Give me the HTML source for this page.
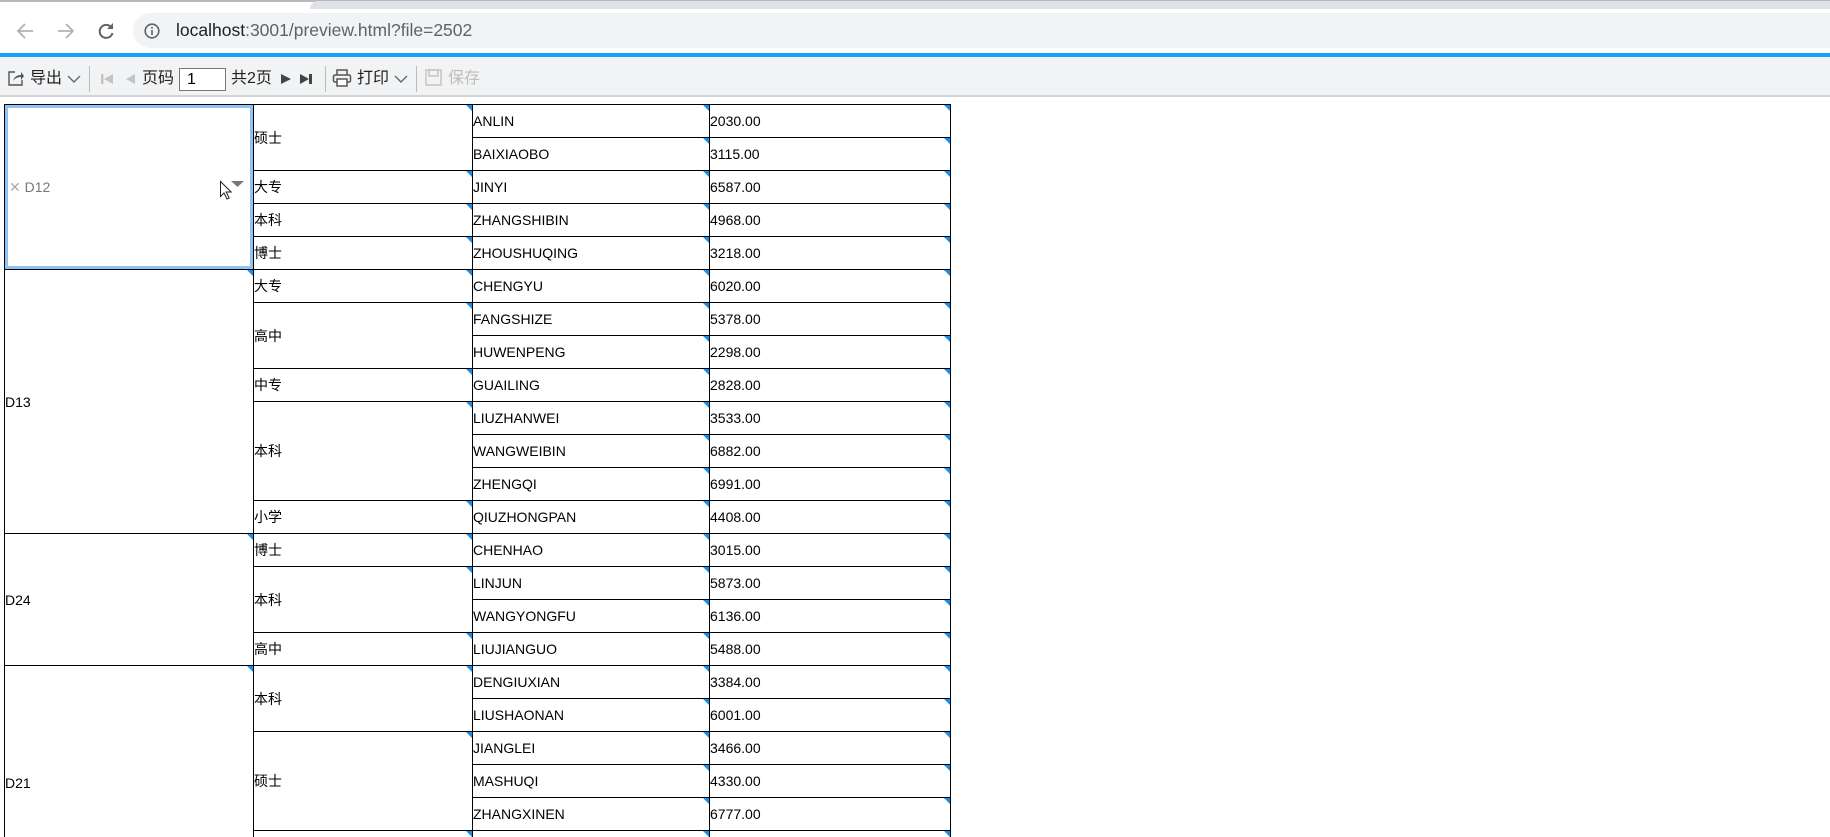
<!DOCTYPE html>
<html style="overflow:hidden;width:1830px;height:837px"><head><meta charset="utf-8">
<style>
*{margin:0;padding:0;box-sizing:border-box}
html,body{width:1830px;height:837px;overflow:hidden;background:#fff}
body{font-family:"Liberation Sans","Noto Sans CJK SC",sans-serif;color:#000}
#w{position:relative;width:1830px;height:837px;overflow:hidden}
.a{position:absolute}
.c{position:absolute;border-left:1px solid #000;border-top:1px solid #000;display:flex;align-items:center;font-size:14px;white-space:nowrap;overflow:visible}
.c:after{content:"";position:absolute;right:0;top:0;border-top:6px solid #1a8ee8;border-left:6px solid transparent}
.l4{border-right:1px solid #000}
.tb{position:absolute;top:68px;font-size:16px;line-height:22px;color:#222}
</style></head><body><div id="w">
<div class="a" style="left:0;top:0;width:1830px;height:2px;background:#b8b9bc"></div>
<div class="a" style="left:310px;top:1px;width:1520px;height:8px;background:#dee1e6;border-radius:8px 0 0 0"></div>
<div class="a" style="left:133px;top:13px;width:1697px;height:35px;background:#f1f3f4;border-radius:18px 0 0 18px"></div>
<svg class="a" style="left:14px;top:20px" width="120" height="22" viewBox="0 0 120 22">
<path d="M19 11H5M11 4L4 11l7 7" stroke="#b0b3b6" stroke-width="1.8" fill="none"/>
<path d="M44 11h14M52 4l7 7-7 7" stroke="#b0b3b6" stroke-width="1.8" fill="none"/>
<path d="M97 7a6.5 6.5 0 1 0 1.5 6" stroke="#5f6368" stroke-width="2" fill="none"/>
<path d="M99 3v6h-6z" fill="#5f6368"/>
</svg>
<svg class="a" style="left:144px;top:23px" width="16" height="16" viewBox="0 0 16 16"><circle cx="8" cy="8" r="6.8" stroke="#5f6368" stroke-width="1.6" fill="none"/><rect x="7.2" y="7" width="1.6" height="5" fill="#5f6368"/><rect x="7.2" y="4" width="1.6" height="1.7" fill="#5f6368"/></svg>
<div class="a" style="left:176px;top:19px;font-size:17.5px;color:#202124;line-height:22px">localhost<span style="color:#5f6368">:3001/preview.html?file=2502</span></div>
<div class="a" style="left:0;top:53px;width:1830px;height:4px;background:#1aa1f5"></div>
<div class="a" style="left:0;top:57px;width:1830px;height:40px;background:#f2f3f4;border-bottom:2px solid #d4d4d4"></div>
<svg class="a" style="left:7px;top:69px" width="18" height="18" viewBox="0 0 18 18"><path d="M8 3H2v13h13v-5" stroke="#555" stroke-width="1.4" fill="none"/><path d="M6 12c1-4 4-6 8-6V3l3 4-3 4V8c-3 0-6 1-8 4z" fill="#555"/></svg>
<div class="tb" style="left:30px">导出</div>
<svg class="a" style="left:67px;top:74px" width="14" height="10"><path d="M1 2l6 6 6-6" stroke="#666" stroke-width="1.4" fill="none"/></svg>
<div class="a" style="left:89px;top:66px;width:1px;height:26px;background:#bbb"></div>
<svg class="a" style="left:101px;top:73px" width="36" height="12"><rect x="0" y="1" width="2.5" height="10" fill="#c4c4c4"/><path d="M12 1v10L3 6z" fill="#c4c4c4"/><path d="M34 1v10l-9-5z" fill="#c4c4c4"/></svg>
<div class="tb" style="left:142px">页码</div>
<div class="a" style="left:179px;top:68px;width:47px;height:23px;background:#fff;border:1px solid #777;font-size:16px;line-height:21px;padding-left:7px">1</div>
<div class="tb" style="left:231px">共2页</div>
<svg class="a" style="left:281px;top:73px" width="34" height="12"><path d="M0 1v10l10-5z" fill="#444"/><path d="M19 1v10l9-5z" fill="#444"/><rect x="28" y="1" width="3" height="10" fill="#444"/></svg>
<div class="a" style="left:325px;top:66px;width:1px;height:26px;background:#bbb"></div>
<svg class="a" style="left:332px;top:68px" width="20" height="20" viewBox="0 0 20 20"><path d="M5 7V2h10v5" stroke="#555" stroke-width="1.5" fill="none"/><rect x="1.5" y="7" width="17" height="7" rx="1.5" stroke="#555" stroke-width="1.5" fill="none"/><rect x="5" y="11" width="10" height="7" stroke="#555" stroke-width="1.5" fill="#fff"/></svg>
<div class="tb" style="left:357px">打印</div>
<svg class="a" style="left:394px;top:74px" width="14" height="10"><path d="M1 2l6 6 6-6" stroke="#666" stroke-width="1.4" fill="none"/></svg>
<div class="a" style="left:416px;top:66px;width:1px;height:26px;background:#bbb"></div>
<svg class="a" style="left:425px;top:69px" width="17" height="17" viewBox="0 0 17 17"><rect x="1" y="1" width="15" height="15" stroke="#c4c4c4" stroke-width="1.5" fill="none"/><rect x="4" y="1" width="9" height="6" stroke="#c4c4c4" stroke-width="1.5" fill="none"/></svg>
<div class="tb" style="left:448px;color:#bdbdbd">保存</div>

<div class="c" style="left:4px;top:104px;width:249px;height:165px;border-right:1px solid #000"></div>
<div class="c" style="left:4px;top:269px;width:249px;height:264px">D13</div>
<div class="c" style="left:4px;top:533px;width:249px;height:132px">D24</div>
<div class="c" style="left:4px;top:665px;width:249px;height:172px;align-items:flex-start;padding-top:107px;line-height:20px">D21</div>
<div class="a" style="left:5px;top:105px;width:248px;height:164px;border:3px solid #8ec3f5;background:#fff"></div>
<div class="a" style="left:9px;top:177px;font-size:14px;color:#777;line-height:20px"><span style="color:#aaa">✕</span> D12</div>
<svg class="a" style="left:219px;top:180px" width="28" height="22"><path d="M12 1h13l-6.5 6z" fill="#777"/><path d="M1.5 1.5v15l3.5-3.5 3 6 2.2-1-3-6h5z" fill="#fff" stroke="#222" stroke-width="1"/></svg>

<div class="c" style="left:253px;top:104px;width:219px;height:66px">硕士</div>
<div class="c" style="left:253px;top:170px;width:219px;height:33px">大专</div>
<div class="c" style="left:253px;top:203px;width:219px;height:33px">本科</div>
<div class="c" style="left:253px;top:236px;width:219px;height:33px">博士</div>
<div class="c" style="left:253px;top:269px;width:219px;height:33px">大专</div>
<div class="c" style="left:253px;top:302px;width:219px;height:66px">高中</div>
<div class="c" style="left:253px;top:368px;width:219px;height:33px">中专</div>
<div class="c" style="left:253px;top:401px;width:219px;height:99px">本科</div>
<div class="c" style="left:253px;top:500px;width:219px;height:33px">小学</div>
<div class="c" style="left:253px;top:533px;width:219px;height:33px">博士</div>
<div class="c" style="left:253px;top:566px;width:219px;height:66px">本科</div>
<div class="c" style="left:253px;top:632px;width:219px;height:33px">高中</div>
<div class="c" style="left:253px;top:665px;width:219px;height:66px">本科</div>
<div class="c" style="left:253px;top:731px;width:219px;height:99px">硕士</div>
<div class="c" style="left:253px;top:830px;width:219px;height:7px"></div>

<div class="c" style="left:472px;top:104px;width:237px;height:33px">ANLIN</div><div class="c l4" style="left:709px;top:104px;width:242px;height:33px">2030.00</div>
<div class="c" style="left:472px;top:137px;width:237px;height:33px">BAIXIAOBO</div><div class="c l4" style="left:709px;top:137px;width:242px;height:33px">3115.00</div>
<div class="c" style="left:472px;top:170px;width:237px;height:33px">JINYI</div><div class="c l4" style="left:709px;top:170px;width:242px;height:33px">6587.00</div>
<div class="c" style="left:472px;top:203px;width:237px;height:33px">ZHANGSHIBIN</div><div class="c l4" style="left:709px;top:203px;width:242px;height:33px">4968.00</div>
<div class="c" style="left:472px;top:236px;width:237px;height:33px">ZHOUSHUQING</div><div class="c l4" style="left:709px;top:236px;width:242px;height:33px">3218.00</div>
<div class="c" style="left:472px;top:269px;width:237px;height:33px">CHENGYU</div><div class="c l4" style="left:709px;top:269px;width:242px;height:33px">6020.00</div>
<div class="c" style="left:472px;top:302px;width:237px;height:33px">FANGSHIZE</div><div class="c l4" style="left:709px;top:302px;width:242px;height:33px">5378.00</div>
<div class="c" style="left:472px;top:335px;width:237px;height:33px">HUWENPENG</div><div class="c l4" style="left:709px;top:335px;width:242px;height:33px">2298.00</div>
<div class="c" style="left:472px;top:368px;width:237px;height:33px">GUAILING</div><div class="c l4" style="left:709px;top:368px;width:242px;height:33px">2828.00</div>
<div class="c" style="left:472px;top:401px;width:237px;height:33px">LIUZHANWEI</div><div class="c l4" style="left:709px;top:401px;width:242px;height:33px">3533.00</div>
<div class="c" style="left:472px;top:434px;width:237px;height:33px">WANGWEIBIN</div><div class="c l4" style="left:709px;top:434px;width:242px;height:33px">6882.00</div>
<div class="c" style="left:472px;top:467px;width:237px;height:33px">ZHENGQI</div><div class="c l4" style="left:709px;top:467px;width:242px;height:33px">6991.00</div>
<div class="c" style="left:472px;top:500px;width:237px;height:33px">QIUZHONGPAN</div><div class="c l4" style="left:709px;top:500px;width:242px;height:33px">4408.00</div>
<div class="c" style="left:472px;top:533px;width:237px;height:33px">CHENHAO</div><div class="c l4" style="left:709px;top:533px;width:242px;height:33px">3015.00</div>
<div class="c" style="left:472px;top:566px;width:237px;height:33px">LINJUN</div><div class="c l4" style="left:709px;top:566px;width:242px;height:33px">5873.00</div>
<div class="c" style="left:472px;top:599px;width:237px;height:33px">WANGYONGFU</div><div class="c l4" style="left:709px;top:599px;width:242px;height:33px">6136.00</div>
<div class="c" style="left:472px;top:632px;width:237px;height:33px">LIUJIANGUO</div><div class="c l4" style="left:709px;top:632px;width:242px;height:33px">5488.00</div>
<div class="c" style="left:472px;top:665px;width:237px;height:33px">DENGIUXIAN</div><div class="c l4" style="left:709px;top:665px;width:242px;height:33px">3384.00</div>
<div class="c" style="left:472px;top:698px;width:237px;height:33px">LIUSHAONAN</div><div class="c l4" style="left:709px;top:698px;width:242px;height:33px">6001.00</div>
<div class="c" style="left:472px;top:731px;width:237px;height:33px">JIANGLEI</div><div class="c l4" style="left:709px;top:731px;width:242px;height:33px">3466.00</div>
<div class="c" style="left:472px;top:764px;width:237px;height:33px">MASHUQI</div><div class="c l4" style="left:709px;top:764px;width:242px;height:33px">4330.00</div>
<div class="c" style="left:472px;top:797px;width:237px;height:33px">ZHANGXINEN</div><div class="c l4" style="left:709px;top:797px;width:242px;height:33px">6777.00</div>
<div class="c" style="left:472px;top:830px;width:237px;height:7px"></div><div class="c l4" style="left:709px;top:830px;width:242px;height:7px"></div>
</div></body></html>
